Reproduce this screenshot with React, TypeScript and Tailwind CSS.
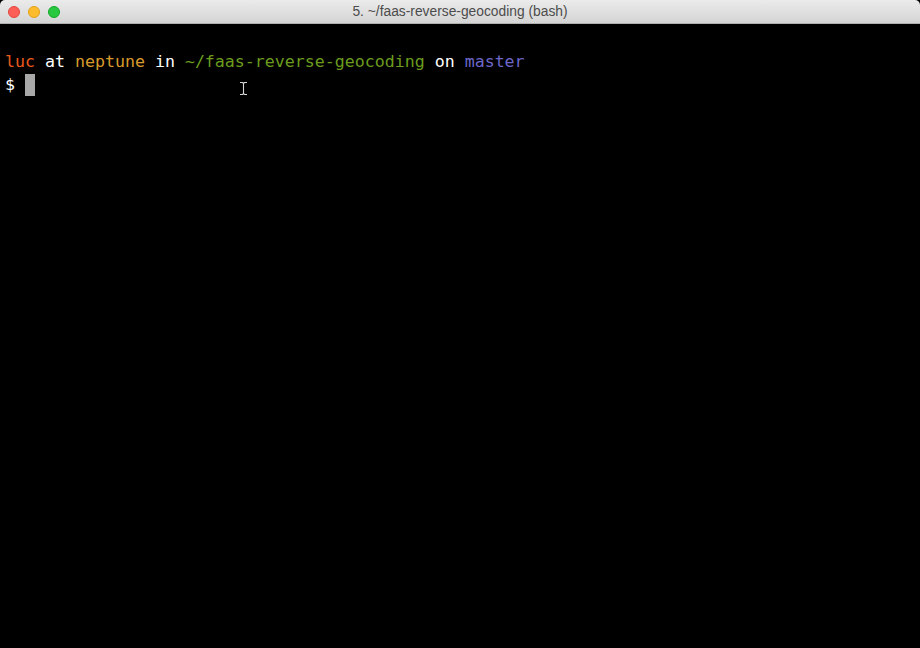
const mono = { fontFamily: '"DejaVu Sans Mono", "Liberation Mono", monospace' };

function TrafficLights() {
  return (
    <div className="absolute left-[8px] top-[6px] flex gap-[8px]">
      <span className="block h-[12px] w-[12px] rounded-full border border-[#e2463f] bg-[#fc5f57]" />
      <span className="block h-[12px] w-[12px] rounded-full border border-[#e1a116] bg-[#fdbc2e]" />
      <span className="block h-[12px] w-[12px] rounded-full border border-[#13a82a] bg-[#28c840]" />
    </div>
  );
}

function IBeam() {
  return (
    <svg
      className="absolute left-[239px] top-[81px]"
      width="9"
      height="15"
      viewBox="0 0 9 15"
    >
      <path
        d="M1 1.5h2.5L4.5 2.5L5.5 1.5H8M4.5 2.5v10M1 13.5h2.5L4.5 12.5L5.5 13.5H8"
        stroke="#d8d8d8"
        strokeWidth="1.1"
        fill="none"
      />
    </svg>
  );
}

export default function App() {
  return (
    <div className="relative h-[648px] w-[920px] overflow-hidden bg-black">
      <div className="relative flex h-[24px] items-center justify-center rounded-t-[5px] border-b border-[#afafaf] bg-gradient-to-b from-[#ebebeb] to-[#d5d5d5]">
        <TrafficLights />
        <span
          className="pt-[1px] text-[13.8px] text-[#4c4c4c]"
          style={{ fontFamily: '"Liberation Sans", Arial, sans-serif' }}
        >
          5. ~/faas-reverse-geocoding (bash)
        </span>
      </div>
      <div
        className="px-[5px] pt-[3px] text-[16.6px] leading-[23px] text-white whitespace-pre"
        style={mono}
      >
        <div>&nbsp;</div>
        <div>
          <span className="text-[#ea5a1d]">luc</span> at{" "}
          <span className="text-[#d99a2c]">neptune</span> in{" "}
          <span className="text-[#6b9c1e]">~/faas-reverse-geocoding</span> on{" "}
          <span className="text-[#6c67c9]">master</span>
        </div>
        <div className="flex items-center">
          <span>$ </span>
          <span className="inline-block h-[22px] w-[10px] bg-[#a8a8a8]" />
        </div>
      </div>
      <IBeam />
    </div>
  );
}
